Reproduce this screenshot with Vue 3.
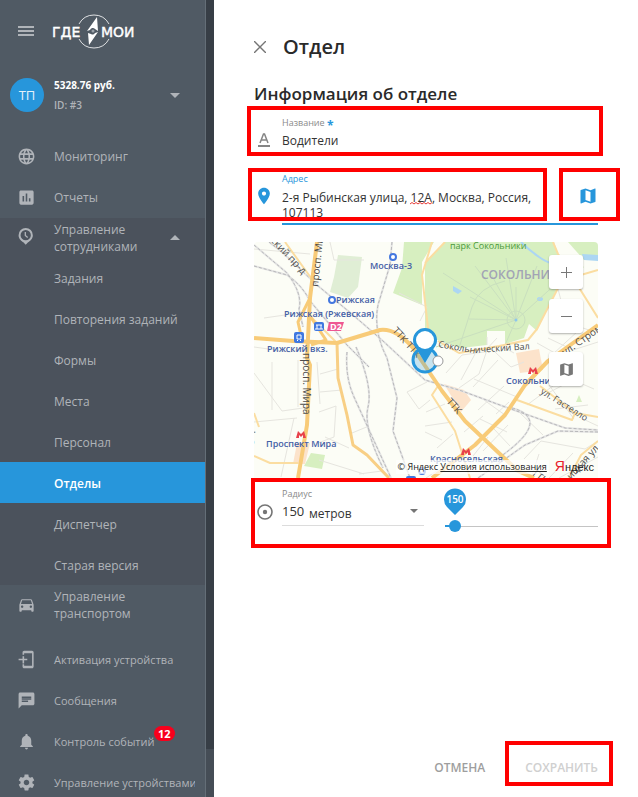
<script setup>
import { computed, ref } from "vue";

const name = ref("Водители");
const address = ref("2-я Рыбинская улица, 12А, Москва, Россия, 107113");
const radius = ref(150);
const unit = ref("m");
const maxRadius = 5000;

const staffOpen = ref(true);
const activeItem = ref("Отделы");
const staffItems = [
  "Задания",
  "Повторения заданий",
  "Формы",
  "Места",
  "Персонал",
  "Отделы",
  "Диспетчер",
  "Старая версия",
];

const thumbLeft = computed(() => {
  const part = radius.value / maxRadius;
  return `calc(6px + (100% - 12px) * ${part})`;
});
</script>

<template>
  <div class="page">
    <aside class="sidebar">
      <div class="sidebar__top">
        <button class="icon__btn burger" type="button" aria-label="Меню">
          <svg width="16" height="12" viewBox="0 0 16 12">
            <path d="M0 2h16M0 6h16M0 10h16" stroke="#b0b4b9" stroke-width="2" />
          </svg>
        </button>
        <svg class="logo" width="84" height="36" viewBox="0 0 84 36">
          <g fill="none" stroke="#dfe1e3" stroke-width="1">
            <path d="M27 11A17 17 0 0 1 57 11" />
            <path d="M27 26A17 17 0 0 0 57 26" />
          </g>
          <text x="0" y="24" class="logo__text">ГДЕ</text>
          <text x="49" y="24" class="logo__text">МОИ</text>
          <path
            d="M45 4L46 18L43 16A3 3 0 0 0 38 17L35 18ZM37 32L36 20L39 21A3 3 0 0 0 43 20L46 19Z"
            fill="#fff"
          />
          <circle cx="41" cy="18" r="1.500" fill="#9aa1a8" />
        </svg>
      </div>

      <button class="account" type="button">
        <span class="account__avatar">ТП</span>
        <span class="account__info">
          <b class="account__balance">5328.76 руб.</b>
          <span class="account__id">ID: #3</span>
        </span>
        <span class="caret caret__down"></span>
      </button>

      <nav class="menu">
        <a class="menu__item" href="#">
          <svg class="menu__icon" viewBox="0 0 24 24">
            <path
              d="M11.990 2C6.470 2 2 6.480 2 12s4.470 10 9.990 10C17.520 22 22 17.520 22 12S17.520 2 11.990 2zm6.930 6h-2.950c-.32-1.250-.78-2.450-1.380-3.560 1.840.63 3.370 1.910 4.330 3.560zM12 4.040c.83 1.200 1.480 2.530 1.910 3.960h-3.820c.43-1.430 1.080-2.760 1.910-3.960zM4.260 14C4.100 13.360 4 12.690 4 12s.1-1.360.26-2h3.380c-.08.66-.14 1.320-.14 2s.06 1.340.14 2H4.260zm.82 2h2.950c.32 1.250.78 2.450 1.380 3.560-1.840-.63-3.370-1.900-4.330-3.560zm2.950-8H5.080c.96-1.660 2.490-2.930 4.330-3.560C8.810 5.550 8.350 6.750 8.030 8zM12 19.960c-.83-1.200-1.480-2.530-1.910-3.960h3.820c-.43 1.430-1.080 2.760-1.910 3.960zM14.340 14H9.660c-.09-.66-.16-1.320-.16-2s.07-1.350.16-2h4.680c.09.65.16 1.320.16 2s-.07 1.340-.16 2zm.25 5.560c.6-1.110 1.060-2.310 1.380-3.560h2.950c-.96 1.650-2.490 2.930-4.330 3.560zM16.360 14c.08-.66.14-1.320.14-2s-.06-1.340-.14-2h3.380c.16.64.26 1.310.26 2s-.1 1.360-.26 2h-3.380z"
            />
          </svg>
          <span>Мониторинг</span>
        </a>
        <a class="menu__item" href="#">
          <svg class="menu__icon" viewBox="0 0 24 24">
            <path
              d="M19 3H5c-1.100 0-2 .9-2 2v14c0 1.100.9 2 2 2h14c1.100 0 2-.9 2-2V5c0-1.100-.9-2-2-2zM9 17H7v-7h2v7zm4 0h-2V7h2v10zm4 0h-2v-4h2v4z"
            />
          </svg>
          <span>Отчеты</span>
        </a>

        <div class="menu__group">
          <button
            class="menu__item menu__head"
            type="button"
            :aria-expanded="staffOpen"
            @click="staffOpen = !staffOpen"
          >
            <svg class="menu__icon" viewBox="0 0 24 24">
              <path
                fill-rule="evenodd"
                d="M11 0a9 9 0 0 0-9 9c0 5 4 7.500 6 9l3 3 3-3c2-1.500 6-4 6-9a9 9 0 0 0-9-9zm0 2.500a6.500 6.500 0 1 1 0 13 6.500 6.500 0 0 1 0-13z"
              />
              <path d="M10.500 5v4.500l3 2.500" fill="none" stroke="#b0b4b9" stroke-width="1.600" />
            </svg>
            <span class="menu__wrap">Управление сотрудниками</span>
            <span class="caret" :class="staffOpen ? 'caret__up' : 'caret__down'"></span>
          </button>
          <template v-if="staffOpen">
            <a
              v-for="item in staffItems"
              :key="item"
              class="menu__sub"
              :class="{ menu__active: item === activeItem }"
              href="#"
              @click.prevent="activeItem = item"
              >{{ item }}</a
            >
          </template>
        </div>

        <a class="menu__item menu__transport" href="#">
          <svg class="menu__icon" viewBox="0 0 24 24">
            <path
              d="M18.920 5.010C18.720 4.420 18.160 4 17.500 4h-11c-.66 0-1.210.42-1.420 1.010L3 11v8c0 .55.45 1 1 1h1c.55 0 1-.45 1-1v-1h12v1c0 .55.45 1 1 1h1c.55 0 1-.45 1-1v-8l-2.080-5.990zM6.500 15c-.83 0-1.500-.67-1.500-1.500S5.670 12 6.500 12s1.500.67 1.500 1.500S7.330 15 6.500 15zm11 0c-.83 0-1.500-.67-1.500-1.500s.67-1.500 1.500-1.500 1.500.67 1.500 1.500-.67 1.500-1.500 1.500zM5 10l1.500-4.500h11L19 10H5z"
            />
          </svg>
          <span class="menu__wrap">Управление транспортом</span>
        </a>

        <a class="menu__item menu__small" href="#">
          <svg class="menu__icon" viewBox="0 0 24 24">
            <path
              d="M7 6V3c0-1 .9-2 2-2h10c1.100 0 2 .9 2 2v18c0 1.100-.9 2-2 2H9c-1.100 0-2-1-2-2v-3h2v2h10V4H9v2zM7 8h2v3h4v2H9v4H7v-4H2v-2h5z"
            />
          </svg>
          <span>Активация устройства</span>
        </a>
        <a class="menu__item menu__small" href="#">
          <svg class="menu__icon" viewBox="0 0 24 24">
            <path
              d="M20 2H4c-1.100 0-1.990.9-1.990 2L2 22l4-4h14c1.100 0 2-.9 2-2V4c0-1.100-.9-2-2-2zM6 9V7h12v2H6zm8 5H6v-2h8v2zm4-3H6v-1.500h12V11z"
            />
          </svg>
          <span>Сообщения</span>
        </a>
        <a class="menu__item menu__small" href="#">
          <svg class="menu__icon" viewBox="0 0 24 24">
            <path
              d="M12 22c1.100 0 2-.9 2-2h-4c0 1.100.89 2 2 2zm6-6v-5c0-3.070-1.640-5.640-4.500-6.320V4c0-.83-.67-1.500-1.500-1.500s-1.500.67-1.500 1.500v.68C7.630 5.360 6 7.920 6 11v5l-2 2v1h16v-1l-2-2z"
            />
          </svg>
          <span class="menu__badged">Контроль событий<span class="badge">12</span></span>
        </a>
        <a class="menu__item menu__small" href="#">
          <svg class="menu__icon" viewBox="0 0 24 24">
            <path
              d="M19.430 12.980c.04-.32.07-.64.07-.98s-.03-.66-.07-.98l2.110-1.650c.19-.15.24-.42.12-.64l-2-3.460c-.12-.22-.39-.3-.61-.22l-2.490 1c-.52-.4-1.080-.73-1.690-.98l-.38-2.650C14.460 2.180 14.250 2 14 2h-4c-.25 0-.46.18-.49.42l-.38 2.650c-.61.25-1.170.59-1.690.98l-2.490-1c-.23-.09-.49 0-.61.22l-2 3.460c-.13.22-.07.49.12.64l2.110 1.650c-.04.32-.07.65-.07.98s.03.66.07.98l-2.110 1.650c-.19.15-.24.42-.12.64l2 3.460c.12.22.39.3.61.22l2.490-1c.52.4 1.080.73 1.690.98l.38 2.650c.03.24.24.42.49.42h4c.25 0 .46-.18.49-.42l.38-2.650c.61-.25 1.170-.59 1.690-.98l2.490 1c.23.09.49 0 .61-.22l2-3.460c.12-.22.07-.49-.12-.64l-2.110-1.650zM12 15.500c-1.930 0-3.500-1.570-3.500-3.500s1.570-3.500 3.500-3.500 3.500 1.570 3.500 3.500-1.570 3.500-3.500 3.500z"
            />
          </svg>
          <span class="menu__clip">Управление устройствами</span>
        </a>
      </nav>
    </aside>
    <div class="scroll"><div class="scroll__thumb"></div></div>

    <main class="panel">
      <header class="panel__head">
        <button class="icon__btn" type="button" aria-label="Закрыть">
          <svg width="12" height="12" viewBox="0 0 12 12">
            <path d="M0 0L12 12M12 0L0 12" stroke="#757575" stroke-width="1.400" />
          </svg>
        </button>
        <h1 class="panel__title">Отдел</h1>
      </header>
      <h2 class="panel__subtitle">Информация об отделе</h2>

      <form class="form" @submit.prevent>
        <div class="field field__name">
          <svg class="field__icon" width="20" height="20" viewBox="0 0 20 20">
            <path
              d="M6 13L9.500 4h1L14 13M7 10h6"
              fill="none"
              stroke="#858585"
              stroke-width="1.500"
            />
            <path d="M4 16h12" stroke="#858585" stroke-width="2" />
          </svg>
          <div class="field__body">
            <label class="field__label" for="name">Название <b class="required">*</b></label>
            <input id="name" class="field__input" type="text" v-model="name" />
          </div>
          <span class="mark mark__name"></span>
        </div>

        <div class="field field__address">
          <svg class="field__icon" width="20" height="20" viewBox="0 0 24 24">
            <path
              d="M12 2C8.130 2 5 5.130 5 9c0 5.250 7 13 7 13s7-7.750 7-13c0-3.870-3.130-7-7-7zm0 9.500c-1.380 0-2.500-1.120-2.500-2.500s1.120-2.500 2.500-2.500 2.500 1.120 2.500 2.500-1.120 2.500-2.500 2.500z"
              fill="#2796db"
            />
          </svg>
          <div class="field__body">
            <label class="field__label field__focused" for="address">Адрес</label>
            <textarea
              id="address"
              class="field__input field__area"
              rows="2"
              spellcheck="false"
              v-model="address"
            ></textarea>
            <svg class="spelling" width="22" height="3" viewBox="0 0 22 3">
              <path
                d="M0 2L2 .5L4 2L6 .5L8 2L10 .5L12 2L14 .5L16 2L18 .5L20 2L22 .5"
                fill="none"
                stroke="#e53935"
                stroke-width="1"
              />
            </svg>
          </div>
          <button class="icon__btn map__toggle" type="button" aria-label="Выбрать на карте">
            <svg width="20" height="20" viewBox="0 0 24 24">
              <path
                d="M20.500 3l-.16.030L15 5.100 9 3 3.360 4.900c-.21.070-.36.250-.36.480V20.500c0 .28.22.5.5.5l.16-.03L9 18.900l6 2.100 5.640-1.900c.21-.07.36-.25.36-.48V3.500c0-.28-.22-.5-.5-.5zM15 19l-6-2.110V5l6 2.110V19z"
                fill="#2796db"
              />
            </svg>
          </button>
          <span class="mark mark__address"></span>
          <span class="mark mark__toggle"></span>
        </div>

        <div class="map">
          <svg class="map__canvas" viewBox="0 0 344 236" preserveAspectRatio="xMidYMid slice">
            <rect width="344" height="236" fill="#fcfdf6" />
            <!-- parks -->
            <g fill="#d7efc0">
              <path d="M84 13L108 15L104 45L94 56L76 50L80 35Z" fill="#e0eed5" />
              <path d="M150 0H180L168 20V63L139 51L148 26Z" />
              <path
                d="M191 0H300L304 12L330 25L303 46L283 89L275 82L270 96L251 102V89H233V103L207 106L186 99L171 93V21Z"
              />
              <path d="M314 0H344V17L330 18Z" />
              <path d="M57 211L71 213L68 227L50 224Z" />
              <path d="M325 153L328 160L322 160Z" />
            </g>
            <g fill="#fce3cb">
              <path d="M262 111L285 107L289 128L266 131Z" />
              <path d="M190 142L210 148L217 158L207 170Z" />
              <path d="M43 201H56L51 222H39Z" />
            </g>
            <g fill="#acd6f3">
              <path d="M199 44L208 49L204 52L199 49Z" />
              <ellipse cx="286" cy="57" rx="3" ry="2" />
              <path d="M328 12L344 13V19L330 18Z" />
            </g>
            <path d="M267 0Q275 8 285 15T302 22" fill="none" stroke="#acd6f3" stroke-width="2" />
            <!-- minor streets -->
            <g fill="none" stroke="#e6e5df" stroke-width="1">
              <path
                d="M76 0L80 18H110M0 7L56 12M10 76L52 70M0 105L36 110L56 103M0 131L28 169L56 165M18 120V168M44 118V165M63 120L66 162M66 132L84 127M66 150L88 148M40 176L27 235M0 180L43 176M65 170L82 164L80 195L64 201M98 191L115 184M65 218L110 232M71 195L95 206M105 232L128 229M145 51L173 65L166 79M153 150L173 140M153 150L165 167L176 158M172 170L191 162M171 184L198 180M171 190L188 198M183 206L199 192M192 131L208 113L230 110L243 96M221 112L207 138M234 105L225 132L205 146M241 110L257 125L270 120M247 104L260 111M219 145L244 118M220 137L263 155M224 168L250 144M226 177L253 190M230 158L251 173M240 187L256 204M210 190L229 174M229 209L254 183M266 171L289 193M273 163L307 138M290 153L323 136M295 143L320 177M312 135L340 147M301 167L334 163M270 217L287 199L331 207L344 199M277 236L285 212M295 236L319 211M305 236L344 215M172 236L184 228M233 95V103M234 195L219 214M245 178L230 196M255 160L242 172M329 177L344 184M294 96L319 108L344 100M283 101L315 119M323 84L344 91M299 112L324 89M304 47L314 85"
              />
            </g>
            <g fill="none" stroke="#c9dfbe" stroke-width="1">
              <circle cx="262" cy="78" r="9" />
              <path
                d="M262 78L182 105M262 78L215 77M262 78L216 55M262 78L189 31M262 78L221 24M262 78L237 32M262 78L252 16M262 78L262 45M262 78L283 24M262 78L304 40M262 78L251 103M205 106L218 65Q224 45 251 39"
              />
            </g>
            <circle cx="262" cy="78" r="1.500" fill="#8cc7ee" />
            <!-- railways -->
            <g fill="none" stroke="#e4e4e4" stroke-width="2">
              <path d="M0 24L33 33Q48 43 56 59L93 103L115 125" />
              <path d="M0 3L33 31Q49 52 45 67L49 85" />
              <path d="M15 0L29 11L63 43L99 73L129 99L171 138L208 149L254 166L311 186L344 188" />
              <path d="M138 0L136 23L124 63Q119 89 133 116L143 156L139 189L156 236" />
              <path d="M93 110Q91 135 100 155L137 236" />
              <path d="M102 105Q119 145 114 165T129 226" />
              <path d="M344 190L304 189L271 203L224 236" />
              <path d="M258 166Q274 170 276 180Q277 195 237 221" />
            </g>
            <g fill="none" stroke="#b8b8ba" stroke-width="1" stroke-dasharray="3 2">
              <path d="M0 24L33 33Q48 43 56 59L93 103L115 125" />
              <path d="M0 3L33 31Q49 52 45 67L49 85" />
              <path d="M15 0L29 11L63 43L99 73L129 99L171 138L208 149L254 166L311 186L344 188" />
              <path d="M138 0L136 23L124 63Q119 89 133 116L143 156L139 189L156 236" />
              <path d="M93 110Q91 135 100 155L137 236" />
              <path d="M102 105Q119 145 114 165T129 226" />
              <path d="M344 190L304 189L271 203L224 236" />
              <path d="M258 166Q274 170 276 180Q277 195 237 221" />
            </g>
            <!-- main roads -->
            <g fill="none" stroke="#fbdda1" stroke-width="2" stroke-linejoin="round">
              <path d="M31 0L60 40M191 0L171 21M178 0L168 33L175 95M299 0L304 12L344 76" />
              <path d="M344 28L320 35L304 46L283 87L274 98L245 104L205 111L184 99" />
              <path
                d="M83 101L84 136L93 173L99 203L113 213L135 236"
                stroke="#f8cf85"
                stroke-width="3"
              />
              <path d="M0 214L16 221H44M0 171L5 185M184 144L178 153L201 189L216 236" />
              <path d="M263 158L318 178L321 171L286 144M344 175L321 171M56 74L83 101" />
              <path d="M344 199L327 213L315 236" />
            </g>
            <g fill="none" stroke="#f8cb78" stroke-linejoin="round">
              <path d="M63 0L56 56L53 116L56 123L53 183L44 236" stroke-width="4" />
              <path
                d="M0 96L39 99L83 101L126 88Q142 86 159 106L188 149L211 179L264 229L280 236"
                stroke-width="4"
              />
              <path d="M344 83L294 119L271 143L251 173L221 203L178 236" stroke-width="4" />
              <path d="M56 56L44 80L48 98M56 74L72 98L57 103" stroke-width="3" />
            </g>
            <!-- street names -->
            <g class="street">
              <text transform="translate(64 45) rotate(-84)">просп. Мира</text>
              <text transform="translate(49 111) rotate(90)">просп. Мира</text>
              <text transform="translate(12 -6) rotate(47)">нский пр-д</text>
              <text transform="translate(138 89) rotate(48)">ТТК ТТК</text>
              <text transform="translate(192 160) rotate(48)">ТТК</text>
              <text transform="translate(277 232) rotate(38)">ТТК</text>
              <text transform="translate(184 105) rotate(10)" class="street__small">Сокольн</text>
              <text transform="translate(221 111) rotate(-4)" class="street__small">
                ический Вал
              </text>
              <text transform="translate(311 114) rotate(-35)">ул. Строми</text>
              <text transform="translate(286 151) rotate(32)" class="street__small">
                ул. Гастелло
              </text>
              <text transform="translate(0 202) rotate(-95)">зерн</text>
              <text transform="translate(317 238) rotate(-48)">ицкая ул.</text>
            </g>
            <text x="196" y="7" class="place place__park">парк Сокольники</text>
            <text x="227" y="37" class="place place__area">СОКОЛЬНИКИ</text>
            <g class="place">
              <text x="116" y="27">Москва-3</text>
              <text x="82" y="61">Рижская</text>
              <text x="30" y="75">Рижская (Ржевская)</text>
              <text x="13" y="110">Рижский вкз.</text>
              <text x="12" y="205">Проспект Мира</text>
              <text x="252" y="142">Сокольники</text>
              <text x="176" y="220">Красносельская</text>
            </g>
            <g fill="#fff" stroke="#4377df" stroke-width="2">
              <circle cx="139" cy="15" r="3" />
              <circle cx="78" cy="58" r="3" />
              <circle cx="168" cy="229" r="3" />
            </g>
            <g fill="#3f78e0">
              <rect x="60" y="80" width="10" height="9" rx="2" />
              <rect x="40" y="90" width="10" height="11" rx="2" />
              <rect x="152" y="234" width="10" height="4" rx="2" />
            </g>
            <path
              d="M62 83h6M63 83v4M67 83v4M61 87h8M43 93h4v4h-4zM43 99l1-1M47 99l-1-1"
              fill="none"
              stroke="#fff"
            />
            <path d="M75 80H90L87 89H73Z" fill="#ee5793" />
            <text x="76" y="88" class="line__tag">D2</text>
            <g fill="#e8424c">
              <path d="M42 196L44 189L47 192L50 189L52 196H49V193L47 195L45 193V196Z" />
              <path d="M274 132L276 125L279 128L282 125L284 132H281V129L279 131L277 129V132Z" />
              <path d="M207 213L209 206L212 209L215 206L217 213H214V210L212 212L210 210V213Z" />
            </g>
            <!-- radius and its centre -->
            <circle
              cx="171"
              cy="118"
              r="12"
              fill="#2796db"
              fill-opacity=".25"
              stroke="#2796db"
              stroke-width="3"
            />
            <path d="M171 121L162 106A12 12 0 1 1 180 106Z" fill="#2796db" />
            <circle cx="171" cy="98" r="9" fill="#fff" />
            <circle cx="184" cy="119" r="5" fill="#fff" stroke="#999" stroke-width="1" />
          </svg>
          <div class="map__controls">
            <button class="map__btn" type="button" aria-label="Приблизить">
              <svg width="11" height="11" viewBox="0 0 11 11">
                <path d="M5.500 0v11M0 5.500h11" stroke="#777" stroke-width="1" />
              </svg>
            </button>
            <button class="map__btn" type="button" aria-label="Отдалить">
              <svg width="11" height="11" viewBox="0 0 11 11">
                <path d="M0 5.500h11" stroke="#777" stroke-width="1" />
              </svg>
            </button>
            <button class="map__btn map__layers" type="button" aria-label="Слои">
              <svg width="17" height="17" viewBox="0 0 24 24">
                <path
                  d="M20.500 3l-.16.030L15 5.100 9 3 3.360 4.900c-.21.070-.36.250-.36.480V20.500c0 .28.22.5.5.5l.16-.03L9 18.900l6 2.100 5.640-1.900c.21-.07.36-.25.36-.48V3.500c0-.28-.22-.5-.5-.5zM15 19l-6-2.110V5l6 2.110V19z"
                  fill="#777"
                />
              </svg>
            </button>
          </div>
          <div class="map__copyright">
            <span class="map__terms">© Яндекс <a href="#">Условия использования</a></span>
            <span class="yandex"><i>Я</i>ндекс</span>
          </div>
        </div>

        <div class="field field__radius">
          <svg class="field__icon" width="20" height="20" viewBox="0 0 20 20">
            <circle cx="11" cy="11" r="7" fill="none" stroke="#757575" stroke-width="1.600" />
            <circle cx="11" cy="11" r="2.200" fill="#757575" />
          </svg>
          <div class="field__body">
            <label class="field__label" for="radius">Радиус</label>
            <div class="radius">
              <input id="radius" class="radius__value" type="text" v-model.number="radius" />
              <select class="radius__unit" aria-label="Единицы" v-model="unit">
                <option value="m">метров</option>
                <option value="km">километров</option>
              </select>
              <span class="caret caret__dark"></span>
            </div>
          </div>
          <div class="slider">
            <div class="slider__tip" :style="{ left: thumbLeft }">
              <svg width="24" height="28" viewBox="0 0 24 28">
                <path d="M12 27L4 19A11 11 0 1 1 20 19Z" fill="#2796db" />
                <text x="12" y="15" text-anchor="middle" class="slider__text">{{ radius }}</text>
              </svg>
            </div>
            <input
              class="slider__range"
              type="range"
              min="0"
              :max="maxRadius"
              step="50"
              aria-label="Радиус"
              v-model.number="radius"
            />
            <div class="slider__fill" :style="{ width: thumbLeft }"></div>
          </div>
          <span class="mark mark__radius"></span>
        </div>

        <footer class="actions">
          <button class="action" type="button">ОТМЕНА</button>
          <button class="action action__save" type="submit">
            СОХРАНИТЬ
            <span class="mark mark__save"></span>
          </button>
        </footer>
      </form>
    </main>
  </div>
</template>

<style>
body {
  background: #fff;
}
</style>

<style scoped>
* {
  box-sizing: border-box;
}

.page {
  display: flex;
  height: 100vh;
  overflow: hidden;
  font-family: "Open Sans", "Noto Sans", sans-serif;
  font-size: 12px;
  color: #2a2a2a;
}

button,
input,
select,
textarea {
  margin: 0;
  padding: 0;
  border: none;
  outline: none;
  background: none;
  font: inherit;
  color: inherit;
}

a {
  color: inherit;
  text-decoration: none;
}

.icon__btn {
  display: flex;
  align-items: center;
  justify-content: center;
  cursor: pointer;
}

/* sidebar */
.sidebar {
  width: 206px;
  flex: none;
  overflow: hidden;
  background: #505a64;
  border-right: 1px solid #646e77;
  color: #b0b4b9;
}

.sidebar__top {
  display: flex;
  align-items: center;
  gap: 18px;
  height: 62px;
  padding-left: 18px;
}

.logo__text {
  font-family: "DejaVu Sans", sans-serif;
  font-size: 14px;
  fill: #fff;
  stroke: #fff;
  stroke-width: 0.4px;
}

.account {
  display: flex;
  align-items: center;
  gap: 10px;
  width: 100%;
  height: 74px;
  padding: 0 25px 8px 10px;
  text-align: left;
}

.account__avatar {
  display: flex;
  align-items: center;
  justify-content: center;
  width: 34px;
  height: 34px;
  border-radius: 50%;
  background: #2796db;
  font-size: 13px;
  color: #e4f2fb;
}

.account__info {
  display: flex;
  flex: 1;
  flex-direction: column;
  font-size: 10px;
  font-weight: 600;
  line-height: 20px;
}

.account__balance {
  font-weight: 700;
  color: #fff;
}

.caret {
  width: 0;
  height: 0;
  border-left: 5px solid transparent;
  border-right: 5px solid transparent;
}

.caret__down {
  border-top: 5px solid #b0b4b9;
}

.caret__up {
  border-bottom: 5px solid #b0b4b9;
}

.caret__dark {
  border-left-width: 4px;
  border-right-width: 4px;
  border-top: 4px solid #757575;
}

.menu__item {
  display: flex;
  align-items: center;
  gap: 18px;
  width: 100%;
  height: 41px;
  padding: 0 10px 0 17px;
  white-space: nowrap;
  text-align: left;
}

.menu__icon {
  flex: none;
  width: 19px;
  height: 19px;
  fill: #b0b4b9;
}

.menu__group {
  background: #4b525c;
}

.menu__head {
  height: 39px;
  padding-right: 25px;
}

.menu__wrap {
  flex: 1;
  line-height: 17px;
  white-space: normal;
}

.menu__sub {
  display: flex;
  align-items: center;
  height: 41px;
  padding-top: 2px;
  padding-left: 54px;
}

.menu__active {
  background: #2796db;
  font-weight: 600;
  color: #fff;
}

.menu__transport {
  height: 54px;
  padding-bottom: 14px;
}

.menu__small {
  font-size: 11px;
}

.menu__badged {
  position: relative;
}

.badge {
  position: absolute;
  right: -20px;
  bottom: 8px;
  padding: 0 4px;
  border-radius: 8px;
  background: #f8001c;
  font-size: 11px;
  font-weight: 700;
  line-height: 15px;
  color: #fff;
}

.menu__clip {
  overflow: hidden;
}

.scroll {
  width: 8px;
  flex: none;
  background: #454d56;
}

.scroll__thumb {
  height: 94%;
  background: #373e46;
}

/* panel */
.panel {
  display: flex;
  flex: 1;
  flex-direction: column;
  min-width: 0;
  padding: 35px 40px 14px;
}

.panel__head {
  display: flex;
  align-items: center;
  gap: 17px;
}

.panel__title,
.panel__subtitle {
  margin: 0;
  font-weight: 600;
  line-height: 24px;
}

.panel__title {
  font-size: 20px;
}

.panel__subtitle {
  margin-top: 23px;
  font-size: 17px;
}

.form {
  display: flex;
  flex: 1;
  flex-direction: column;
}

.field {
  position: relative;
  display: flex;
}

.field__icon {
  flex: none;
  margin-right: 8px;
}

.field__body {
  position: relative;
  flex: 1;
}

.field__label {
  display: block;
  height: 14px;
  font-size: 9px;
  line-height: 14px;
  color: #8a8a8a;
}

.field__focused {
  color: #2796db;
}

.required {
  font-size: 12px;
  line-height: 10px;
  vertical-align: -4px;
  color: #2796db;
}

.field__input {
  display: block;
  width: 100%;
  line-height: 18px;
  color: #333;
}

.field__area {
  width: 256px;
  height: 30px;
  margin-top: 4px;
  overflow: hidden;
  line-height: 15px;
  resize: none;
}

.field__name {
  margin-top: 10px;
}

.field__name .field__input {
  padding-top: 2px;
}

.field__name .field__icon,
.field__radius .field__icon {
  margin-top: 14px;
}

.field__address {
  margin-top: 22px;
}

.field__address .field__icon {
  margin-top: 14px;
}

.field__address .field__body {
  padding-bottom: 5px;
}

.field__address::after {
  content: "";
  position: absolute;
  right: 0;
  bottom: 0;
  left: 28px;
  height: 2px;
  background: #2796db;
}

.spelling {
  position: absolute;
  top: 30px;
  left: 128px;
}

.map__toggle {
  width: 20px;
  height: 20px;
  margin-top: 14px;
}

.mark {
  position: absolute;
  border: 4px solid #f00;
  pointer-events: none;
}

.mark__name {
  inset: -10px -5px -6px -7px;
}

.mark__address {
  inset: -4px 51px 4px -6px;
}

.mark__toggle {
  inset: -4px -22px 4px auto;
  width: 61px;
}

.mark__radius {
  inset: -9px -13px -16px -3px;
}

.mark__save {
  inset: -10px -15px -3px -20px;
}

/* map */
.map {
  position: relative;
  height: 236px;
  margin-top: 17px;
  overflow: hidden;
  border-radius: 4px 4px 0 0;
}

.map__canvas {
  display: block;
  width: 100%;
  height: 100%;
}

.street {
  font-size: 10px;
  fill: #4c4c4c;
}

.street__small {
  font-size: 9px;
}

.place {
  font-size: 9px;
  font-weight: 600;
  fill: #4560a6;
}

.place__park {
  font-size: 9px;
  font-weight: 500;
  fill: #4a9a3a;
}

.place__area {
  font-size: 12px;
  fill: #a2a3b5;
}

.line__tag {
  font-size: 9px;
  font-weight: 700;
  fill: #fff;
}

.map__controls {
  position: absolute;
  top: 13px;
  right: 15px;
  display: flex;
  flex-direction: column;
  gap: 10px;
}

.map__btn {
  display: flex;
  align-items: center;
  justify-content: center;
  width: 34px;
  height: 34px;
  border-radius: 3px;
  background: #fff;
  box-shadow: 0 1px 2px rgba(0, 0, 0, 0.3);
}

.map__layers {
  margin-top: 9px;
}

.map__copyright {
  position: absolute;
  right: 4px;
  bottom: 4px;
  display: flex;
  align-items: center;
  gap: 6px;
  font-size: 9px;
  line-height: 14px;
}

.map__terms {
  padding: 0 2px;
  background: rgba(255, 255, 255, 0.7);
  color: #222;
}

.map__terms a {
  text-decoration: underline;
}

.yandex {
  font-family: "Liberation Sans", sans-serif;
  font-size: 11px;
  color: #222;
}

.yandex i {
  font-style: normal;
  font-size: 14px;
  color: #e8202a;
}

/* radius */
.field__radius {
  margin-top: 9px;
}

.radius {
  display: flex;
  align-items: center;
  height: 25px;
  padding-right: 6px;
  padding-bottom: 4px;
  border-bottom: 1px solid #dcdcdc;
}

.radius__value {
  width: 27px;
  font-size: 13px;
  color: #333;
}

.radius__unit {
  flex: 1;
  min-width: 0;
  padding-top: 4px;
  appearance: none;
  color: #333;
}

.slider {
  position: relative;
  flex: 1;
  align-self: flex-start;
  margin-left: 21px;
}

.field__radius .field__body {
  flex: none;
  width: 142px;
}

.slider__tip {
  position: absolute;
  top: 1px;
  margin-left: -12px;
}

.slider__text {
  font-size: 10px;
  font-weight: 600;
  fill: #fff;
}

.slider__range {
  display: block;
  width: 100%;
  height: 12px;
  margin-top: 33px;
  appearance: none;
  background: linear-gradient(#c4c4c4, #c4c4c4) center / 100% 1px no-repeat;
}

.slider__range::-webkit-slider-thumb {
  width: 12px;
  height: 12px;
  appearance: none;
  border-radius: 50%;
  background: #2796db;
}

.slider__fill {
  position: absolute;
  bottom: 5px;
  left: 0;
  height: 2px;
  background: #2796db;
  pointer-events: none;
}

.actions {
  display: flex;
  justify-content: flex-end;
  gap: 40px;
  margin-top: auto;
}

.action {
  position: relative;
  height: 32px;
  font-weight: 600;
  color: #9e9e9e;
}

.action__save {
  color: #d0d0d0;
}
</style>
